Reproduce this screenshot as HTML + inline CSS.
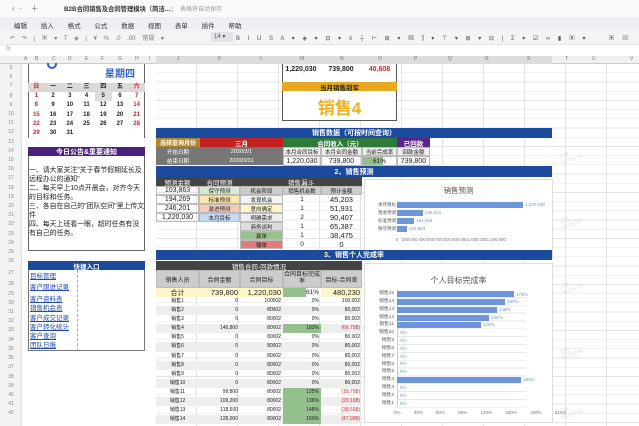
<!DOCTYPE html><html><head><meta charset="utf-8"><style>
*{margin:0;padding:0;box-sizing:border-box}
body{width:639px;height:426px;overflow:hidden;background:#fff;position:relative;font-family:"Liberation Sans","Noto Sans CJK SC",sans-serif;color:#222}
.a{position:absolute}
.c{position:absolute;display:flex;align-items:center;justify-content:center;font-size:6.5px;white-space:nowrap;overflow:hidden}
.r{justify-content:flex-end;padding-right:2px}
.l{justify-content:flex-start;padding-left:2px}
.b{border:0.5px solid #bbb}
.w{color:#fff;font-weight:bold}
.blue{background:#1c4a9c}
.dk{background:#444}
.gr{background:#d9d9d9}
.grid{background-image:repeating-linear-gradient(to bottom,transparent 0 8.5px,#e3e3e3 8.5px 9.2px),repeating-linear-gradient(to right,transparent 0 40px,#e3e3e3 40px 41px)}
</style></head><body>
<!-- title bar -->
<div class="a" style="left:0;top:0;width:639px;height:17px;background:#fafafa"></div>
<div class="c" style="left:12px;top:3px;font-size:8px;color:#777">‹ &nbsp;·&nbsp;&nbsp;&nbsp; ＋</div>
<div class="c" style="left:64px;top:3px;height:10px;font-size:6.3px;font-weight:bold;color:#333">B2B合同销售及合同管理模块（简洁...</div>
<div class="c" style="left:170px;top:3px;height:10px;font-size:6px;color:#999">▯ &nbsp;&nbsp;&nbsp;表格将自动保存</div>
<!-- menu -->
<div class="a" style="left:0;top:17px;width:639px;height:13px;background:#efeff3"></div>
<div class="a" style="left:14px;top:20px;font-size:6.5px;color:#333;word-spacing:12px">编辑 插入 格式 公式 数据 视图 表单 插件 帮助</div>
<!-- toolbar -->
<div class="a" style="left:0;top:30px;width:639px;height:14px;background:#f4f4f7"></div>
<div class="a" style="left:10px;top:33px;font-size:6px;color:#777;word-spacing:5px">↶ ↷ | ▣ ▾ T ◈ | ¥ % .0 .00 常规 ▾&nbsp;&nbsp;&nbsp;&nbsp;&nbsp;&nbsp; 字体 ▾</div>
<div class="a" style="left:211px;top:32px;width:22px;height:10px;background:#e2e2e6;font-size:6px;color:#555;padding-left:3px;padding-top:1px">14 ▾</div>
<div class="a" style="left:236px;top:33px;font-size:6px;color:#555;word-spacing:6px">B I U S A ▾ ◈ ▾ ⊟ ▾ ≡ ┼ ⊢ ⊞ ▾ ▦ ⫿ ▾ ⊤ ▾ ⊞ ▾ ⊟ | Σ ▾ ☑ ∞ ▮ ▣ ▾&nbsp;&nbsp; ▣ ▤ ▣</div>
<!-- formula bar -->
<div class="a" style="left:0;top:44px;width:639px;height:12px;background:#fff;border-top:1px solid #e5e5e5"></div>
<div class="a" style="left:6px;top:46px;font-size:6px;color:#999;font-style:italic">fx</div>
<!-- column headers -->
<div class="a" style="left:0;top:56px;width:639px;height:8px;background:#f0f0f0;border-bottom:1px solid #ccc"></div>
<div class="a" style="left:156px;top:56px;width:396px;height:8px;background:#dcdcdc"></div>
<div class="a" style="left:0;top:56px;font-size:5px;color:#777;width:639px;height:8px">
<span class="a" style="left:24px">A</span><span class="a" style="left:35px">B</span><span class="a" style="left:52px">C</span><span class="a" style="left:68px">D</span><span class="a" style="left:85px">E</span><span class="a" style="left:101px">F</span><span class="a" style="left:118px">G</span><span class="a" style="left:135px">H</span><span class="a" style="left:149px">I</span><span class="a" style="left:177px">J</span><span class="a" style="left:218px">K</span><span class="a" style="left:260px">L</span><span class="a" style="left:300px">M</span><span class="a" style="left:340px">N</span><span class="a" style="left:378px">O</span><span class="a" style="left:414px">P</span><span class="a" style="left:448px">Q</span><span class="a" style="left:485px">R</span><span class="a" style="left:527px">S</span><span class="a" style="left:565px">T</span><span class="a" style="left:592px">U</span><span class="a" style="left:630px">V</span></div>
<!-- row numbers -->
<div class="a" style="left:0;top:64px;width:22px;height:362px;background:#f3f3f3;border-right:1px solid #ddd"></div>
<div class="a" style="left:0;top:64px;width:22px;font-size:5px;color:#888;text-align:center;line-height:9.2px">5<br>6<br>7<br>8<br>9<br>10<br>11<br>12<br>13<br>14<br>15<br>16<br>17<br>18<br>19<br>20<br>21<br>22<br>23<br>24<br>25<br>26<br><span style="line-height:14px">27</span><br>28<br>29<br>30<br>31<br>32<br>33<br>34<br>35<br>36<br>37<br>38<br>39<br>40<br>41<br>42</div>
<!-- right grid -->
<div class="a grid" style="left:156px;top:64px;width:483px;height:362px"></div>
<div class="a" style="left:22px;top:64px;width:134px;height:362px;background:#fff"></div>
<!-- calendar -->
<div class="a" style="left:28px;top:64px;width:117px;height:74px;border-left:1px solid #666;border-right:1px solid #666"></div>
<div class="a" style="left:47px;top:63px;width:10px;height:6px;border:2px solid #2b5fd0;border-top:none;border-radius:0 0 6px 6px"></div>
<div class="c" style="left:95px;top:66px;width:50px;height:12px;font-size:10px;color:#2b5fd0;font-weight:bold">星期四</div>
<div class="a gr" style="left:28px;top:83px;width:117px;height:9px"></div>
<div class="a" style="left:95px;top:92px;width:17px;height:9px;background:#ddd"></div>
<div class="a" style="left:28px;top:83px;width:117px;font-size:6px;font-weight:bold">
<div style="display:grid;grid-template-columns:repeat(7,1fr);text-align:center;line-height:9.2px">
<span style="color:#d22">日</span><span>一</span><span>二</span><span>三</span><span>四</span><span>五</span><span style="color:#d22">六</span>
<span style="color:#d22">1</span><span>2</span><span>3</span><span>4</span><span>5</span><span>6</span><span style="color:#d22">7</span>
<span style="color:#d22">8</span><span>9</span><span>10</span><span>11</span><span>12</span><span>13</span><span style="color:#d22">14</span>
<span style="color:#d22">15</span><span>16</span><span>17</span><span>18</span><span>19</span><span>20</span><span style="color:#d22">21</span>
<span style="color:#d22">22</span><span>23</span><span>24</span><span>25</span><span>26</span><span>27</span><span style="color:#d22">28</span>
<span style="color:#d22">29</span><span>30</span><span>31</span><span></span><span></span><span></span><span></span>
</div></div>
<!-- notice -->
<div class="a" style="left:28px;top:147px;width:117px;height:104px;border:1px solid #666"></div>
<div class="c w" style="left:28px;top:147px;width:117px;height:9px;background:#4b1f7e;font-size:7px">今日公告&amp;重要通知</div>
<div class="a" style="left:29px;top:166px;width:116px;font-size:6.9px;line-height:9px;color:#222">一、请大家关注"关于春节假期延长及远程办公的通知"<br>二、每天早上10点开晨会，对齐今天的目标和任务。<br>三、各自在自己的"团队空间"里上传文件<br>四、每天上班看一眼，超时任务有没有自己的任务。</div>
<!-- quick links -->
<div class="a" style="left:28px;top:261px;width:117px;height:90px;border:1px solid #777"></div>
<div class="c w" style="left:28px;top:261px;width:117px;height:9px;background:#1c4a9c;font-size:6.5px">快捷入口</div>
<div class="a" style="left:77px;top:270px;width:1px;height:81px;border-left:1px dashed #aaa"></div>
<div class="a" style="left:30px;top:272px;font-size:6.5px;color:#1c4ab0;text-decoration:underline;line-height:9.2px">目标管理<br><span style="line-height:14px">客户跟进记录</span><br>客户资料表<br>销售机会表<br>客户成交记录<br>客户转化统计<br>客户查询<br>团队日报</div>
<!-- top right values -->
<div class="a" style="left:282px;top:64px;width:115px;height:57px;border:1px solid #555;border-top:none;background:#fff"></div>
<div class="c" style="left:282px;top:65px;width:38px;height:9px;font-size:7px;font-weight:bold">1,220,030</div>
<div class="c" style="left:320px;top:65px;width:42px;height:9px;font-size:7px;font-weight:bold">739,800</div>
<div class="c" style="left:362px;top:65px;width:35px;height:9px;font-size:7px;font-weight:bold;color:#e02020">40,608</div>
<div class="c" style="left:282px;top:82px;width:115px;height:9px;background:#e6a91f;font-size:6.5px;font-weight:bold">当月销售冠军</div>
<div class="c" style="left:282px;top:92px;width:115px;height:28px;font-size:17px;font-weight:bold;color:#f0b020">销售4</div>
<!-- sales data -->
<div class="c w blue" style="left:156px;top:128px;width:396px;height:10px;font-size:7px">销售数据（可按时间查询）</div>
<div class="c w" style="left:156px;top:138px;width:44px;height:9px;background:#b7862b;font-size:6px">选择查询月份</div>
<div class="c w" style="left:200px;top:138px;width:83px;height:9px;background:#c0201e;font-size:6.5px">三月</div>
<div class="c w" style="left:283px;top:138px;width:114px;height:9px;background:#2f7a3b;font-size:6.5px">合同收入（元）</div>
<div class="c w" style="left:397px;top:138px;width:33px;height:9px;background:#5b2487;font-size:6.5px">已回款</div>
<div class="c w" style="left:156px;top:147px;width:44px;height:9px;background:#777;font-size:5.5px;font-weight:normal">开始日期</div>
<div class="c w" style="left:200px;top:147px;width:83px;height:9px;background:#777;font-size:5.5px;font-weight:normal">2020/3/1</div>
<div class="c w" style="left:156px;top:156px;width:44px;height:9px;background:#777;font-size:5.5px;font-weight:normal">结束日期</div>
<div class="c w" style="left:200px;top:156px;width:83px;height:9px;background:#777;font-size:5.5px;font-weight:normal">2020/3/31</div>
<div class="c b" style="left:283px;top:147px;width:38px;height:9px;background:#eee;font-size:5.5px">本月合同目标</div>
<div class="c b" style="left:321px;top:147px;width:41px;height:9px;background:#eee;font-size:5.5px">本月合同金额</div>
<div class="c b" style="left:362px;top:147px;width:35px;height:9px;background:#eee;font-size:5.5px">当前完成率</div>
<div class="c b" style="left:397px;top:147px;width:33px;height:9px;background:#eee;font-size:5.5px">回款金额</div>
<div class="c b" style="left:283px;top:156px;width:38px;height:10px;font-size:7px">1,220,030</div>
<div class="c b" style="left:321px;top:156px;width:41px;height:10px;font-size:7px">739,800</div>
<div class="c b" style="left:362px;top:156px;width:35px;height:10px;font-size:6.5px;background:linear-gradient(to right,#93c08c 0 61%,#fff 61%)">61%</div>
<div class="c b" style="left:397px;top:156px;width:33px;height:10px;font-size:7px">739,800</div>
<!-- forecast -->
<div class="c w blue" style="left:156px;top:166px;width:396px;height:11px;font-size:7px">2、销售预测</div>
<div class="c w dk" style="left:156px;top:177px;width:43px;height:9px;font-size:6.5px;font-weight:normal">预测金额</div>
<div class="c w dk" style="left:199px;top:177px;width:41px;height:9px;font-size:6.5px;font-weight:normal">合同预测</div>
<div class="c w dk" style="left:240px;top:177px;width:122px;height:9px;font-size:6.5px;font-weight:normal">销售漏斗</div>
<div class="c b" style="left:156px;top:186px;width:43px;height:9px;font-size:7px">103,863</div>
<div class="c b" style="left:156px;top:195px;width:43px;height:9px;font-size:7px">194,269</div>
<div class="c b" style="left:156px;top:204px;width:43px;height:9px;font-size:7px">246,201</div>
<div class="c b" style="left:156px;top:213px;width:43px;height:9px;font-size:7px">1,220,030</div>
<div class="c b" style="left:199px;top:186px;width:41px;height:9px;font-size:5.5px;background:#d9ead3">保守预测</div>
<div class="c b" style="left:199px;top:195px;width:41px;height:9px;font-size:5.5px;background:#fde9a9">标准预测</div>
<div class="c b" style="left:199px;top:204px;width:41px;height:9px;font-size:5.5px;background:#f8cbb8">激进预测</div>
<div class="c b" style="left:199px;top:213px;width:41px;height:9px;font-size:5.5px;background:#c7d9f1">本月目标</div>
<div class="c b" style="left:240px;top:186px;width:43px;height:9px;font-size:5.5px;background:#ccc">机会阶段</div>
<div class="c b" style="left:283px;top:186px;width:38px;height:9px;font-size:5.5px;background:#ccc">销售机会数</div>
<div class="c b" style="left:321px;top:186px;width:41px;height:9px;font-size:5.5px;background:#ccc">预计金额</div>
<div class="c b" style="left:240px;top:195px;width:43px;height:9px;font-size:5.5px;background:#f3f3f3">发现机会</div>
<div class="c b" style="left:240px;top:204px;width:43px;height:9px;font-size:5.5px;background:#fdf6c8">意向确定</div>
<div class="c b" style="left:240px;top:213px;width:43px;height:9px;font-size:5.5px;background:#eee">明确需求</div>
<div class="c b" style="left:240px;top:222px;width:43px;height:9px;font-size:5.5px;background:#ddd">商务谈判</div>
<div class="c b" style="left:240px;top:231px;width:43px;height:9px;font-size:5.5px;background:#9bc28e">赢单</div>
<div class="c b" style="left:240px;top:240px;width:43px;height:9px;font-size:5.5px;background:#e57a7a">输单</div>
<div class="a" style="left:283px;top:195px;width:79px;font-size:6.5px;line-height:9px">
<div style="display:grid;grid-template-columns:38px 41px;text-align:center"><span>1</span><span style="font-size:7.5px">45,203</span><span>1</span><span style="font-size:7.5px">51,931</span><span>2</span><span style="font-size:7.5px">90,407</span><span>1</span><span style="font-size:7.5px">65,387</span><span>1</span><span style="font-size:7.5px">38,475</span><span>0</span><span style="font-size:7.5px">0</span></div></div>
<!-- chart1 -->
<div class="a" style="left:364px;top:179px;width:189px;height:80px;background:#fff;border:1px solid #ddd"></div>
<div class="c" style="left:364px;top:184px;width:189px;height:12px;font-size:7.5px;color:#555">销售预测</div>
<div class="a" style="left:372px;top:201px;font-size:4.5px;color:#555;line-height:8px;text-align:right;width:24px">本月目标<br>激进预测<br>标准预测<br>保守预测</div>
<div class="a" style="left:397px;top:202px;width:126px;height:6px;background:#6d96dc"></div>
<div class="a" style="left:397px;top:210px;width:26px;height:6px;background:#6d96dc"></div>
<div class="a" style="left:397px;top:218px;width:17px;height:6px;background:#6d96dc"></div>
<div class="a" style="left:397px;top:226px;width:10px;height:6px;background:#6d96dc"></div>
<div class="a" style="left:525px;top:202px;font-size:4.5px;color:#6d96dc">1,220,030</div>
<div class="a" style="left:425px;top:210px;font-size:4.5px;color:#6d96dc">246,201</div>
<div class="a" style="left:416px;top:218px;font-size:4.5px;color:#6d96dc">194,269</div>
<div class="a" style="left:409px;top:226px;font-size:4.5px;color:#6d96dc">103,863</div>
<div class="a" style="left:396px;top:237px;font-size:4.3px;color:#777">0&nbsp;&nbsp; 200,000 400,000 600,000 800,0001,000,0001,200,000</div>
<!-- section 3 -->
<div class="c w blue" style="left:156px;top:250px;width:396px;height:10px;font-size:7px">3、销售个人完成率</div>
<div class="c w dk" style="left:156px;top:261px;width:206px;height:9px;font-size:6.5px;font-weight:normal">销售合同-回款情况</div>
<div class="c b" style="left:156px;top:270px;width:43px;height:18px;font-size:6px;background:#ccc">销售人员</div>
<div class="c b" style="left:199px;top:270px;width:41px;height:18px;font-size:6px;background:#ccc">合同金额</div>
<div class="c b" style="left:240px;top:270px;width:43px;height:18px;font-size:6px;background:#ccc">合同目标</div>
<div class="c b" style="left:283px;top:270px;width:38px;height:18px;font-size:6px;background:#ccc;white-space:normal;text-align:center;line-height:7px">合同目标完成率</div>
<div class="c b" style="left:321px;top:270px;width:41px;height:18px;font-size:6px;background:#ccc">目标-合同差</div>
<div class="a" style="left:156px;top:288px;width:206px;height:9px;background:#fdf6c8"></div>
<div class="c" style="left:156px;top:288px;width:43px;height:9px;font-size:7px">合计</div>
<div class="c r" style="left:199px;top:288px;width:41px;height:9px;font-size:7.5px">739,800</div>
<div class="c r" style="left:240px;top:288px;width:43px;height:9px;font-size:7.5px">1,220,030</div>
<div class="c r" style="left:283px;top:288px;width:38px;height:9px;font-size:6.5px;background:linear-gradient(to right,#93c08c 0 61%,#fff 61%)">61%</div>
<div class="c r" style="left:321px;top:288px;width:41px;height:9px;font-size:7.5px">480,230</div>
<div class="a" style="left:156px;top:297px;width:206px;font-size:5px;line-height:9.1px">
<div style="display:grid;grid-template-columns:43px 41px 43px 38px 41px">
<span style="text-align:center">销售1</span><span style="text-align:right;padding-right:2px">0</span><span style="text-align:right;padding-right:2px">100002</span><span style="text-align:right;padding-right:2px">0%</span><span style="text-align:right;padding-right:2px">100,002</span>
<span style="text-align:center;background:#eee">销售2</span><span style="text-align:right;padding-right:2px;background:#eee">0</span><span style="text-align:right;padding-right:2px;background:#eee">80002</span><span style="text-align:right;padding-right:2px;background:#eee">0%</span><span style="text-align:right;padding-right:2px;background:#eee">80,002</span>
<span style="text-align:center">销售3</span><span style="text-align:right;padding-right:2px">0</span><span style="text-align:right;padding-right:2px">80002</span><span style="text-align:right;padding-right:2px">0%</span><span style="text-align:right;padding-right:2px">80,002</span>
<span style="text-align:center;background:#eee">销售4</span><span style="text-align:right;padding-right:2px;background:#eee">146,800</span><span style="text-align:right;padding-right:2px;background:#eee">80002</span><span style="text-align:right;padding-right:2px;background:#93c08c">183%</span><span style="text-align:right;padding-right:2px;background:#eee;color:#e02020">(66,798)</span>
<span style="text-align:center">销售5</span><span style="text-align:right;padding-right:2px">0</span><span style="text-align:right;padding-right:2px">80002</span><span style="text-align:right;padding-right:2px">0%</span><span style="text-align:right;padding-right:2px">80,002</span>
<span style="text-align:center;background:#eee">销售6</span><span style="text-align:right;padding-right:2px;background:#eee">0</span><span style="text-align:right;padding-right:2px;background:#eee">80002</span><span style="text-align:right;padding-right:2px;background:#eee">0%</span><span style="text-align:right;padding-right:2px;background:#eee">80,002</span>
<span style="text-align:center">销售7</span><span style="text-align:right;padding-right:2px">0</span><span style="text-align:right;padding-right:2px">80002</span><span style="text-align:right;padding-right:2px">0%</span><span style="text-align:right;padding-right:2px">80,002</span>
<span style="text-align:center;background:#eee">销售8</span><span style="text-align:right;padding-right:2px;background:#eee">0</span><span style="text-align:right;padding-right:2px;background:#eee">80002</span><span style="text-align:right;padding-right:2px;background:#eee">0%</span><span style="text-align:right;padding-right:2px;background:#eee">80,002</span>
<span style="text-align:center">销售9</span><span style="text-align:right;padding-right:2px">0</span><span style="text-align:right;padding-right:2px">80002</span><span style="text-align:right;padding-right:2px">0%</span><span style="text-align:right;padding-right:2px">80,002</span>
<span style="text-align:center;background:#eee">销售10</span><span style="text-align:right;padding-right:2px;background:#eee">0</span><span style="text-align:right;padding-right:2px;background:#eee">80002</span><span style="text-align:right;padding-right:2px;background:#eee">0%</span><span style="text-align:right;padding-right:2px;background:#eee">80,002</span>
<span style="text-align:center">销售11</span><span style="text-align:right;padding-right:2px">99,800</span><span style="text-align:right;padding-right:2px">80002</span><span style="text-align:right;padding-right:2px;background:#93c08c">125%</span><span style="text-align:right;padding-right:2px;color:#e02020">(19,798)</span>
<span style="text-align:center;background:#eee">销售12</span><span style="text-align:right;padding-right:2px;background:#eee">109,200</span><span style="text-align:right;padding-right:2px;background:#eee">80002</span><span style="text-align:right;padding-right:2px;background:#93c08c">136%</span><span style="text-align:right;padding-right:2px;background:#eee;color:#e02020">(29,198)</span>
<span style="text-align:center">销售13</span><span style="text-align:right;padding-right:2px">118,600</span><span style="text-align:right;padding-right:2px">80002</span><span style="text-align:right;padding-right:2px;background:#93c08c">148%</span><span style="text-align:right;padding-right:2px;color:#e02020">(38,598)</span>
<span style="text-align:center;background:#eee">销售14</span><span style="text-align:right;padding-right:2px;background:#eee">128,000</span><span style="text-align:right;padding-right:2px;background:#eee">80002</span><span style="text-align:right;padding-right:2px;background:#93c08c">160%</span><span style="text-align:right;padding-right:2px;background:#eee;color:#e02020">(47,998)</span>
</div></div>
<!-- chart2 -->
<div class="a" style="left:364px;top:263px;width:189px;height:160px;background:#fff;border:1px solid #ddd"></div>
<div class="c" style="left:364px;top:274px;width:189px;height:12px;font-size:8px;color:#555">个人目标完成率</div>
<div class="a" style="left:366px;top:290px;width:28px;font-size:4.8px;color:#555;line-height:7.85px;text-align:right">销售15<br>销售14<br>销售13<br>销售12<br>销售11<br>销售10<br>销售9<br>销售8<br>销售7<br>销售6<br>销售5<br>销售4<br>销售3<br>销售2<br>销售1</div>
<div class="a" style="left:397px;top:290px;width:129px;height:118px;background-image:repeating-linear-gradient(to bottom,transparent 0 7px,#e6e6e6 7px 7.85px);border-left:1px solid #ccc"></div>
<div class="a" style="left:397px;top:291px;width:117px;height:6px;background:#6d96dc"></div>
<div class="a" style="left:397px;top:299px;width:108px;height:6px;background:#6d96dc"></div>
<div class="a" style="left:397px;top:307px;width:100px;height:6px;background:#6d96dc"></div>
<div class="a" style="left:397px;top:315px;width:92px;height:6px;background:#6d96dc"></div>
<div class="a" style="left:397px;top:322px;width:84px;height:6px;background:#6d96dc"></div>
<div class="a" style="left:397px;top:377px;width:124px;height:6px;background:#6d96dc"></div>
<div class="a" style="left:516px;top:291px;font-size:4.5px;color:#6d96dc;line-height:7.85px">173%</div>
<div class="a" style="left:507px;top:299px;font-size:4.5px;color:#6d96dc">160%</div>
<div class="a" style="left:499px;top:307px;font-size:4.5px;color:#6d96dc">148%</div>
<div class="a" style="left:491px;top:315px;font-size:4.5px;color:#6d96dc">136%</div>
<div class="a" style="left:483px;top:322px;font-size:4.5px;color:#6d96dc">125%</div>
<div class="a" style="left:523px;top:377px;font-size:4.5px;color:#6d96dc">183%</div>
<div class="a" style="left:400px;top:329px;font-size:4.5px;color:#6d96dc;line-height:7.85px">0%<br>0%<br>0%<br>0%<br>0%<br>0%<br><br>0%<br>0%<br>0%</div>
<div class="a" style="left:394px;top:410px;font-size:4.5px;color:#777;word-spacing:12px">0% 30% 60% 90% 120% 150% 180% 210%</div>
<!-- watermarks -->
<div class="a" style="left:560px;top:150px;font-size:5px;color:#ddd;transform:rotate(-20deg)">王鹏<br>28225216</div>
<div class="a" style="left:560px;top:215px;font-size:5px;color:#ddd;transform:rotate(-20deg)">王鹏<br>28225216</div>
<div class="a" style="left:560px;top:280px;font-size:5px;color:#ddd;transform:rotate(-20deg)">王鹏<br>28225216</div>
<div class="a" style="left:560px;top:345px;font-size:5px;color:#ddd;transform:rotate(-20deg)">王鹏<br>28225216</div>
<div class="a" style="left:560px;top:405px;font-size:5px;color:#ddd;transform:rotate(-20deg)">王鹏<br>28225216</div>
</body></html>
